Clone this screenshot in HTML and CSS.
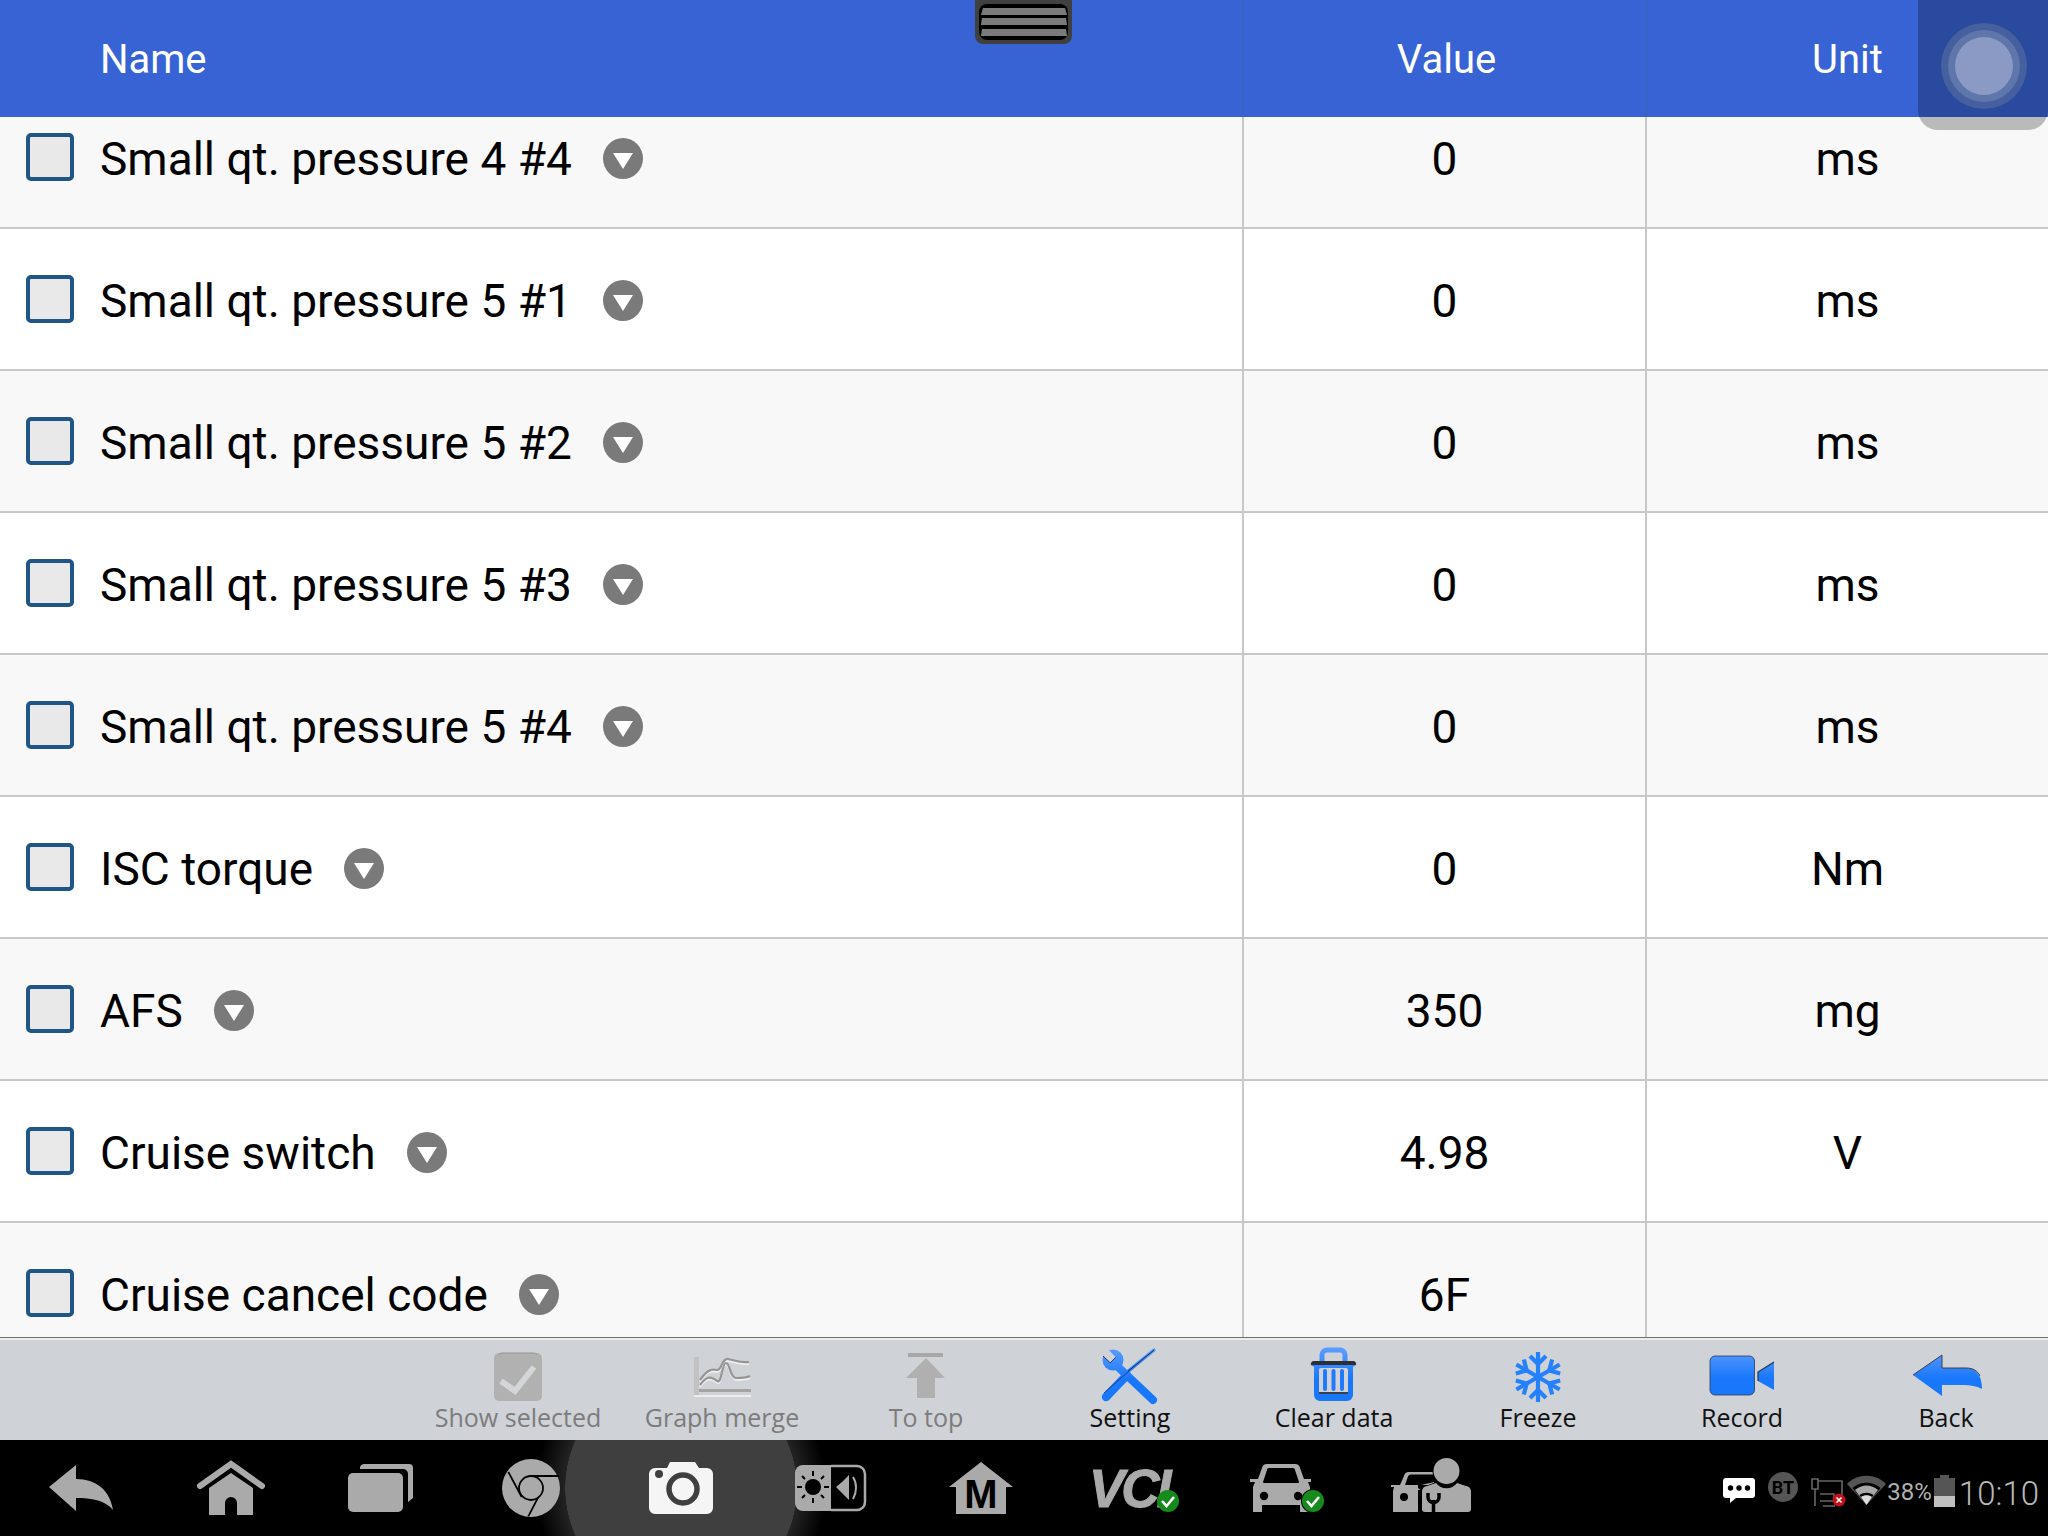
FILE: index.html
```html
<!DOCTYPE html>
<html lang="en">
<head>
    <meta charset="UTF-8">
    <title>Live Data</title>
    <link rel="stylesheet" href="styles.css">
</head>
<body>
    <svg class="defs" width="0" height="0">
        <defs>
            <linearGradient id="blue" gradientUnits="userSpaceOnUse" x1="0" y1="-28" x2="0" y2="2">
                <stop offset="0" stop-color="#5a9cff"/>
                <stop offset="1" stop-color="#1877fb"/>
            </linearGradient>
        </defs>
    </svg>

    <div class="screen">
        <div class="table-head">
            <div class="cell cell-name">Name</div>
            <div class="cell cell-value head-value">Value</div>
            <div class="cell cell-unit">Unit</div>
        </div>

        <div class="table-body">
            <div class="rows">
                <div class="row">
                    <div class="cell cell-name"><span class="check"></span><span class="name">Small qt. pressure 4 #4</span><span class="drop"></span></div>
                    <div class="cell cell-value">0</div>
                    <div class="cell cell-unit">ms</div>
                </div>
                <div class="row">
                    <div class="cell cell-name"><span class="check"></span><span class="name">Small qt. pressure 5 #1</span><span class="drop"></span></div>
                    <div class="cell cell-value">0</div>
                    <div class="cell cell-unit">ms</div>
                </div>
                <div class="row">
                    <div class="cell cell-name"><span class="check"></span><span class="name">Small qt. pressure 5 #2</span><span class="drop"></span></div>
                    <div class="cell cell-value">0</div>
                    <div class="cell cell-unit">ms</div>
                </div>
                <div class="row">
                    <div class="cell cell-name"><span class="check"></span><span class="name">Small qt. pressure 5 #3</span><span class="drop"></span></div>
                    <div class="cell cell-value">0</div>
                    <div class="cell cell-unit">ms</div>
                </div>
                <div class="row">
                    <div class="cell cell-name"><span class="check"></span><span class="name">Small qt. pressure 5 #4</span><span class="drop"></span></div>
                    <div class="cell cell-value">0</div>
                    <div class="cell cell-unit">ms</div>
                </div>
                <div class="row">
                    <div class="cell cell-name"><span class="check"></span><span class="name">ISC torque</span><span class="drop"></span></div>
                    <div class="cell cell-value">0</div>
                    <div class="cell cell-unit">Nm</div>
                </div>
                <div class="row">
                    <div class="cell cell-name"><span class="check"></span><span class="name">AFS</span><span class="drop"></span></div>
                    <div class="cell cell-value">350</div>
                    <div class="cell cell-unit">mg</div>
                </div>
                <div class="row">
                    <div class="cell cell-name"><span class="check"></span><span class="name">Cruise switch</span><span class="drop"></span></div>
                    <div class="cell cell-value">4.98</div>
                    <div class="cell cell-unit">V</div>
                </div>
                <div class="row">
                    <div class="cell cell-name"><span class="check"></span><span class="name">Cruise cancel code</span><span class="drop"></span></div>
                    <div class="cell cell-value">6F</div>
                    <div class="cell cell-unit"></div>
                </div>
            </div>
        </div>

        <div class="toolbar">
            <div class="tool tool-off">
                <svg viewBox="-36 -30 72 60" width="72" height="60">
                    <rect x="-24" y="-24" width="48" height="48" rx="5" fill="#b1b1b1"/>
                    <path d="M-19 -22 a3 3 0 0 1 3 -2 H16 a3 3 0 0 1 3 2" fill="none" stroke="#969696"/>
                    <path d="M-17 4 L-3 14 L16 -10" fill="none" stroke="#d3d5d8" stroke-width="6"/>
                </svg>
                <span>Show selected</span>
            </div>
            <div class="tool tool-off">
                <svg viewBox="-36 -30 72 60" width="72" height="60">
                    <rect x="-28" y="-20" width="5" height="40" fill="#c2c2c2"/>
                    <rect x="-23" y="12" width="52" height="3" fill="#a3a3a3"/>
                    <rect x="-28" y="18" width="57" height="2" fill="#ececec"/>
                    <path d="M-22 5 C-16 -3 -12 -7 -5 -5 C0 -5 0 -17 6 -16 C12 -15 18 -12 27 -13" fill="none" stroke="#f2f2f2" stroke-width="1.5"/>
                    <path d="M-22 10 C-16 2 -12 0 -5 6 C0 9 0 -12 4 -12 C8 -12 8 3 14 3 C18 3 24 3 28 1" fill="none" stroke="#f2f2f2" stroke-width="1.5"/>
                    <path d="M-22 3 C-16 -5 -12 -9 -5 -7 C0 -7 0 -19 6 -18 C12 -17 18 -14 27 -15" fill="none" stroke="#959595" stroke-width="2.2"/>
                    <path d="M-22 8 C-16 0 -12 -2 -5 4 C0 7 0 -14 4 -14 C8 -14 8 1 14 1 C18 1 24 1 28 -1" fill="none" stroke="#959595" stroke-width="2.2"/>
                </svg>
                <span>Graph merge</span>
            </div>
            <div class="tool tool-off">
                <svg viewBox="-36 -30 72 60" width="72" height="60">
                    <rect x="-18" y="-24" width="35" height="4" fill="#a8a8a8"/>
                    <path d="M0 -19 L-20 1 H-9 V21 H9 V1 H19 Z" fill="#b0b0b0"/>
                </svg>
                <span>To top</span>
            </div>
            <div class="tool">
                <svg viewBox="-36 -30 72 60" width="72" height="60">
                    <circle cx="-17" cy="-17" r="10.500" fill="url(#blue)"/>
                    <path d="M-14 -12 L23 23" stroke="url(#blue)" stroke-width="8" stroke-linecap="round"/>
                    <polygon points="-14.2,-19.8 -19.8,-14.2 -30,-24.2 -24.2,-30" fill="#cfd2d6"/>
                    <path d="M-14.2 -19.8 L-19.8 -14.2 L-27 -21" fill="none" stroke="#2b3a55" stroke-width="1"/>
                    <path d="M-4 -4 L24 -27" stroke="url(#blue)" stroke-width="3.500" stroke-linecap="round"/>
                    <path d="M-4 -4 L24 -27" stroke="#1c2c45" stroke-width="1"/>
                    <path d="M-3 -2 L-24 20" stroke="url(#blue)" stroke-width="8.500" stroke-linecap="round"/>
                    <path d="M-1 -6 L-26 16" stroke="#1c2c45" stroke-width="1" opacity=".7"/>
                </svg>
                <span>Setting</span>
            </div>
            <div class="tool">
                <svg viewBox="-36 -30 72 60" width="72" height="60">
                    <path d="M-12 -14 V-22 a5 5 0 0 1 5 -5 H6 a5 5 0 0 1 5 5 V-14" fill="none" stroke="url(#blue)" stroke-width="5"/>
                    <path d="M-23 -12 a3 3 0 0 1 3 -4 H19 a3 3 0 0 1 3 4 Z" fill="#2d2f36"/>
                    <path d="M-23 -12 H22 L19 -10 V18 a6 6 0 0 1 -6 6 H-14 a6 6 0 0 1 -6 -6 V-10 Z" fill="url(#blue)"/>
                    <rect x="-15" y="-9" width="29" height="26" rx="2" fill="#cfd2d6"/>
                    <rect x="-15" y="15" width="29" height="2" fill="#3b3f47"/>
                    <rect x="-11" y="-8" width="4" height="22" rx="2" fill="#1f7bfb"/>
                    <rect x="-2.500" y="-8" width="4" height="22" rx="2" fill="#1f7bfb"/>
                    <rect x="6" y="-8" width="4" height="22" rx="2" fill="#1f7bfb"/>
                </svg>
                <span>Clear data</span>
            </div>
            <div class="tool">
                <svg viewBox="-36 -30 72 60" width="72" height="60">
                    <defs>
                        <g id="arm" fill="none" stroke="#2480fb" stroke-width="4.200">
                            <path d="M0 0 V-25"/>
                            <path d="M-8 -21 L0 -13 L8 -21"/>
                        </g>
                    </defs>
                    <use href="#arm"/>
                    <use href="#arm" transform="rotate(60)"/>
                    <use href="#arm" transform="rotate(120)"/>
                    <use href="#arm" transform="rotate(180)"/>
                    <use href="#arm" transform="rotate(240)"/>
                    <use href="#arm" transform="rotate(300)"/>
                </svg>
                <span>Freeze</span>
            </div>
            <div class="tool">
                <svg viewBox="-36 -30 72 60" width="72" height="60">
                    <rect x="-32" y="-21" width="44.500" height="39" rx="5" fill="url(#blue)" stroke="#2d3950" stroke-width=".8"/>
                    <path d="M16 -5 L32 -15 V13 L16 4 Z" fill="url(#blue)"/>
                    <path d="M16 4 V-5 L32 -15" fill="none" stroke="#26344b" stroke-width="1.200"/>
                </svg>
                <span>Record</span>
            </div>
            <div class="tool">
                <svg viewBox="-36 -30 72 60" width="72" height="60">
                    <path d="M-33 -2 L-4 -22 V-9 H20 C30 -9 36 -2 36 12 C30 9 25 8 18 8 H-4 V19 Z" fill="url(#blue)"/>
                    <path d="M-33 -2 L-4 -22 V-9 H20 C27 -9 32 -6 34 -1" fill="none" stroke="#3c3f46" stroke-width="1"/>
                </svg>
                <span>Back</span>
            </div>
        </div>

        <div class="navbar">
            <div class="nav-slot">
                <svg viewBox="-48 -32 96 64" width="96" height="64">
                    <path d="M-32 -1 L-5 -23 V-9 C15 -9 29 2 32 22 C24 12 10 10 -5 10 V23 Z" fill="#aaa"/>
                </svg>
            </div>
            <div class="nav-slot">
                <svg viewBox="-48 -32 96 64" width="96" height="64">
                    <path d="M-31 -2 L0 -24 L31 -2" fill="none" stroke="#aaa" stroke-width="6" stroke-linecap="round"/>
                    <path d="M-22 0 L0 -15 L22 0 V27 H6 V15 a6 6 0 0 0 -12 0 V27 H-22 Z" fill="#aaa"/>
                </svg>
            </div>
            <div class="nav-slot">
                <svg viewBox="-48 -32 96 64" width="96" height="64">
                    <path d="M-21 -19 a4 4 0 0 1 4 -5 H28 a4 4 0 0 1 4 4 V10 l-5 4 V-14 a5 5 0 0 0 -5 -5 Z" fill="#aaa"/>
                    <rect x="-33" y="-15" width="55" height="39" rx="5" fill="#aaa"/>
                </svg>
            </div>
            <div class="nav-slot">
                <svg viewBox="-48 -32 96 64" width="96" height="64">
                    <circle cx="0" cy="0" r="29" fill="#aaa"/>
                    <path d="M0 -12 H27.500 M-22.700 -16 L-9.300 9 M11.700 0.700 L-2.700 28.300" stroke="#000" stroke-width="1.800"/>
                    <circle cx="0" cy="0" r="12" fill="#aaa" stroke="#000" stroke-width="1.800"/>
                </svg>
            </div>
            <div class="nav-slot">
                <span class="nav-glow"></span>
                <svg viewBox="-48 -32 96 64" width="96" height="64">
                    <path d="M-32 -14 a6 6 0 0 1 6 -6 H-14 L-11 -26 H14 L18 -20 H26 a6 6 0 0 1 6 6 V20 a6 6 0 0 1 -6 6 H-26 a6 6 0 0 1 -6 -6 Z" fill="#f5f5f5"/>
                    <circle cx="2" cy="1" r="14" fill="none" stroke="#3f3f3f" stroke-width="5.500"/>
                    <circle cx="-22" cy="-14" r="4" fill="#3f3f3f"/>
                </svg>
            </div>
            <div class="nav-slot">
                <svg viewBox="-48 -32 96 64" width="96" height="64">
                    <path d="M0 -23 H-28 a8 8 0 0 0 -8 8 V15 a8 8 0 0 0 8 8 H0 Z" fill="#aaa"/>
                    <path d="M0 -22 H26 a8 8 0 0 1 8 8 V14 a8 8 0 0 1 -8 8 H0" fill="none" stroke="#aaa" stroke-width="2.500"/>
                    <circle cx="-18" cy="-1" r="8" fill="#000"/>
                    <path d="M-18 -17 V-12 M-18 10 V15 M-34 -1 H-29 M-7 -1 H-2 M-29 -12 L-26 -9 M-7 -12 L-10 -9 M-29 10 L-26 7 M-7 10 L-10 7" stroke="#000" stroke-width="2"/>
                    <path d="M5 -1 L11 -6 L18 -13 V12 L11 5 Z" fill="#aaa"/>
                    <path d="M22 -11 C26 -5 26 4 22 11" fill="none" stroke="#aaa" stroke-width="2"/>
                </svg>
            </div>
            <div class="nav-slot">
                <svg viewBox="-48 -32 96 64" width="96" height="64">
                    <path d="M0 -26 L32 -1 H25 V26 H-25 V-1 H-32 Z" fill="#aaa"/>
                    <text class="nav-m" x="0" y="20" text-anchor="middle">M</text>
                </svg>
            </div>
            <div class="nav-slot">
                <svg viewBox="-48 -32 96 64" width="96" height="64">
                    <text class="nav-vci" x="-42" y="19">VCI</text>
                    <circle cx="37" cy="13" r="11" fill="#178a1e"/>
                    <path d="M31 13 L35.500 18 L43 9" fill="none" stroke="#fff" stroke-width="2.600"/>
                </svg>
            </div>
            <div class="nav-slot">
                <svg viewBox="-48 -32 96 64" width="96" height="64">
                    <path d="M-14 -24 H14 a5 5 0 0 1 5 4 L23 -9 H30 V-6 H27 L29 -1 V24 H19 V17 H-19 V24 H-28 V-1 L-26 -6 H-31 V-9 H-23 L-19 -20 a5 5 0 0 1 5 -4 Z" fill="#aaa"/>
                    <path d="M-12 -20 H12 a2 2 0 0 1 2 2 L18 -6 a1 1 0 0 1 -1 1 H-17 a1 1 0 0 1 -1 -1 L-14 -18 a2 2 0 0 1 2 -2 Z" fill="#000"/>
                    <circle cx="-17" cy="8" r="4.200" fill="#000"/>
                    <circle cx="17" cy="8" r="4.200" fill="#000"/>
                    <circle cx="32" cy="13" r="12" fill="#000"/>
                    <circle cx="32" cy="13" r="11" fill="#178a1e"/>
                    <path d="M26 13 L30.500 18 L38 9" fill="none" stroke="#fff" stroke-width="2.600"/>
                </svg>
            </div>
            <div class="nav-slot">
                <svg viewBox="-48 -32 96 64" width="96" height="64">
                    <path d="M3 -16 H-22 a5 5 0 0 0 -5 4 L-31 -3 H-40 V-1 H-37 L-38 3 V24 H-13 V2 H3 Z" fill="#aaa"/>
                    <path d="M3 -13.500 H-20 a3 3 0 0 0 -3 2 L-26 -3 H-10 L3 -6 Z" fill="#000"/>
                    <circle cx="-27" cy="9" r="4" fill="#000"/>
                    <circle cx="15.500" cy="-17" r="14" fill="#000"/>
                    <circle cx="15.500" cy="-17" r="13" fill="#aaa"/>
                    <path d="M-13 -3 H-3 L5 -6 a13 13 0 0 0 21 0 L35 -3 a6 6 0 0 1 5 6 V21 a3 3 0 0 1 -3 3 H-6 a3 3 0 0 1 -3 -3 V3 L-13 0 Z" fill="#000"/>
                    <path d="M5 -5 a13 13 0 0 0 21 0 L35 -2 a6 6 0 0 1 5 5 V21 a3 3 0 0 1 -3 3 H-6 a3 3 0 0 1 -3 -3 V3 a6 6 0 0 1 5 -5 Z" fill="#aaa"/>
                    <path d="M-3 5 V9 a5.500 5.500 0 0 0 11 0 V5 M2.500 12 V24" fill="none" stroke="#000" stroke-width="3.500"/>
                </svg>
            </div>

            <div class="status">
                <svg class="st-chat" viewBox="0 0 32 40" width="32" height="40">
                    <path d="M3 10 H29 a3 3 0 0 1 3 3 V27 a3 3 0 0 1 -3 3 H13 L7 35 V30 H3 a3 3 0 0 1 -3 -3 V13 a3 3 0 0 1 3 -3 Z" fill="#fff"/>
                    <circle cx="7.500" cy="20" r="2.700" fill="#000"/>
                    <circle cx="16" cy="20" r="2.700" fill="#000"/>
                    <circle cx="24.500" cy="20" r="2.700" fill="#000"/>
                </svg>
                <svg class="st-bt" viewBox="0 0 30 40" width="30" height="40">
                    <circle cx="15" cy="19" r="15" fill="#555"/>
                    <text class="st-bt-text" x="15" y="25.500" text-anchor="middle">BT</text>
                </svg>
                <svg class="st-net" viewBox="0 0 36 40" width="36" height="40">
                    <path d="M1 11 H7 V21 H1 Z M4 21 V38 M7 13 H31 V30 M9 26 H23 V33 H9 M12 38 H24" fill="none" stroke="#666" stroke-width="1.600"/>
                    <circle cx="28" cy="32" r="6.500" fill="#c0111b"/>
                    <path d="M25.500 29.500 L30.500 34.500 M30.500 29.500 L25.500 34.500" stroke="#fff" stroke-width="1.600"/>
                </svg>
                <svg class="st-wifi" viewBox="0 0 39 40" width="39" height="40">
                    <path d="M0 16 C10 5 29 5 39 16 L19.500 37 Z" fill="#555"/>
                    <path d="M5.500 20 C13 13 26 13 33.500 20 L19.500 37 Z" fill="#000"/>
                    <path d="M8 22 C15 16 24 16 31 22 L19.500 37 Z" fill="#a8a8a8"/>
                    <path d="M12.500 27 C17 24 22 24 26.500 27 L19.500 37 Z" fill="#000"/>
                    <path d="M14 29 C17 26.500 22 26.500 25 29 L19.500 37 Z" fill="#ddd"/>
                </svg>
                <span class="st-pct">38%</span>
                <svg class="st-batt" viewBox="0 0 21 40" width="21" height="40">
                    <rect x="6" y="7" width="9" height="4" fill="#555"/>
                    <rect x="0" y="10" width="21" height="18" fill="#555"/>
                    <rect x="0" y="28" width="21" height="11" fill="#c0c0c0"/>
                </svg>
                <span class="st-time">10:10</span>
            </div>
        </div>

        <svg class="handle" viewBox="0 0 97 44" width="97" height="44">
            <path d="M0 0 H97 V36 a8 8 0 0 1 -8 8 H8 a8 8 0 0 1 -8 -8 Z" fill="#404040"/>
            <rect x="4" y="4" width="89" height="36" rx="8" fill="#000"/>
            <path d="M8 8 H90 L92 15 H6 Z M7 18 H91 L92 25 H6 Z M7 29 H91 L92 36 H6 Z" fill="#7b7b7b"/>
        </svg>

        <div class="float-btn">
            <div class="float-ring-a">
                <div class="float-ring-b">
                    <div class="float-ring-c"></div>
                </div>
            </div>
        </div>
    </div>
</body>
</html>
```

FILE: styles.css
```css
* {
    margin: 0;
    padding: 0;
    box-sizing: border-box;
}

body {
    font-family: Roboto, 'Liberation Sans', sans-serif;
    background: #000;
    color: #000;
}

.defs {
    position: absolute;
}

.screen {
    position: relative;
    width: 2048px;
    height: 1536px;
    display: flex;
    flex-direction: column;
    overflow: hidden;
    background: #fff;
}

/* table */
.table-head,
.row {
    display: grid;
    grid-template-columns: 1244px 403px 1fr;
}

.table-head {
    height: 117px;
    flex: none;
    background: #3763d4;
    color: #fff;
    font-size: 40px;
}

.table-head .cell {
    padding-top: 2px;
    border-right-color: #2f69ab;
    border-right-width: 1px;
}

.table-head .cell-name {
    padding-left: 100px;
}

.cell {
    display: flex;
    align-items: center;
    justify-content: center;
    border-right: 2px solid #c8c8c8;
}

.cell-name {
    justify-content: flex-start;
}

.cell-unit,
.table-head .cell-unit {
    border-right: none;
}

.head-value {
    padding-left: 3px;
}

.table-body {
    flex: 1;
    min-height: 0;
    overflow: hidden;
}

/* list is scrolled, first row is cut by the header */
.rows {
    margin-top: -30px;
}

.row {
    height: 142px;
    font-size: 46px;
    border-bottom: 2px solid #c8c8c8;
    background: #fff;
}

.row:nth-child(odd) {
    background: #f8f8f8;
}

.row .cell-name {
    padding-left: 26px;
}

.row .cell-value,
.row .cell-unit,
.name {
    padding-top: 4px;
}

.check {
    width: 48px;
    height: 48px;
    background: #e9e9e9;
    border: 4px solid #1f5587;
    border-radius: 5px;
    margin-right: 26px;
    flex: none;
}

.drop {
    position: relative;
    width: 40px;
    height: 41px;
    margin-left: 31px;
    margin-top: 2px;
    border-radius: 50%;
    background: #7a7a7a;
    flex: none;
}

.drop::after {
    content: "";
    position: absolute;
    left: 10px;
    top: 15px;
    border-left: 10px solid transparent;
    border-right: 10px solid transparent;
    border-top: 16px solid #fff;
}

/* bottom tools */
.toolbar {
    flex: none;
    height: 103px;
    display: flex;
    justify-content: flex-end;
    background: #cfd2d6;
    border-top: 1px solid #6e6e6e;
    box-shadow: inset 0 2px 0 #eee;
}

.tool {
    width: 204px;
    display: flex;
    flex-direction: column;
    align-items: center;
    padding-top: 9px;
    font-family: 'Open Sans', Roboto, sans-serif;
    font-size: 25px;
    line-height: 32px;
    color: #111;
}

.tool svg {
    display: block;
    flex: none;
    margin-bottom: -6px;
}

.tool-off {
    color: #7c7c7c;
}

/* android nav */
.navbar {
    position: relative;
    flex: none;
    height: 96px;
    display: flex;
    align-items: center;
    padding-left: 6px;
    background: #000;
    overflow: hidden;
}

.nav-slot {
    position: relative;
    width: 150px;
    flex: none;
    display: flex;
    justify-content: center;
}

.nav-slot svg {
    position: relative;
    z-index: 1;
    display: block;
    overflow: visible;
}

.nav-glow {
    position: absolute;
    z-index: 0;
    left: 50%;
    top: 50%;
    width: 290px;
    height: 290px;
    margin: -145px 0 0 -145px;
    border-radius: 50%;
    background: radial-gradient(circle, #3f3f3f 0, #3f3f3f 115.500px, #232323 116px, #000 145px);
}

.nav-m {
    font-family: 'Liberation Sans', sans-serif;
    font-weight: bold;
    font-size: 40px;
    fill: #000;
}

.nav-vci {
    font-family: 'Liberation Sans', sans-serif;
    font-weight: bold;
    font-style: italic;
    font-size: 53px;
    letter-spacing: -3px;
    fill: #aaa;
    stroke: #aaa;
    stroke-width: 1;
}

.status {
    margin-left: auto;
    padding-right: 9px;
    display: flex;
    align-items: center;
}

.st-bt {
    margin-left: 13px;
}

.st-bt-text {
    font-family: Roboto, sans-serif;
    font-weight: bold;
    font-size: 18px;
    fill: #000;
}

.st-net {
    margin-left: 13px;
}

.st-wifi {
    margin-left: 0;
}

.st-pct {
    margin-left: 1px;
    padding-top: 8px;
    font-size: 24px;
    color: #b0b0b0;
}

.st-batt {
    margin-left: 2px;
}

.st-time {
    margin-left: 4px;
    padding-top: 10px;
    font-size: 33px;
    font-weight: 300;
    color: #b8b8b8;
}

/* overlays */
.handle {
    position: absolute;
    left: 975px;
    top: 0;
}

.float-btn {
    position: absolute;
    left: 1918px;
    top: 0;
    width: 130px;
    height: 130px;
    border-radius: 0 0 20px 20px;
    background: rgba(0, 0, 0, 0.25);
    display: flex;
    align-items: center;
    justify-content: center;
}

.float-ring-a,
.float-ring-b,
.float-ring-c {
    border-radius: 50%;
    display: flex;
    align-items: center;
    justify-content: center;
}

.float-ring-a {
    width: 86px;
    height: 86px;
    background: #465f9e;
    margin-top: 2px;
    margin-left: 2px;
}

.float-ring-b {
    width: 72px;
    height: 72px;
    background: #5f76ab;
}

.float-ring-c {
    width: 58px;
    height: 58px;
    background: #8a9ac4;
}
```
